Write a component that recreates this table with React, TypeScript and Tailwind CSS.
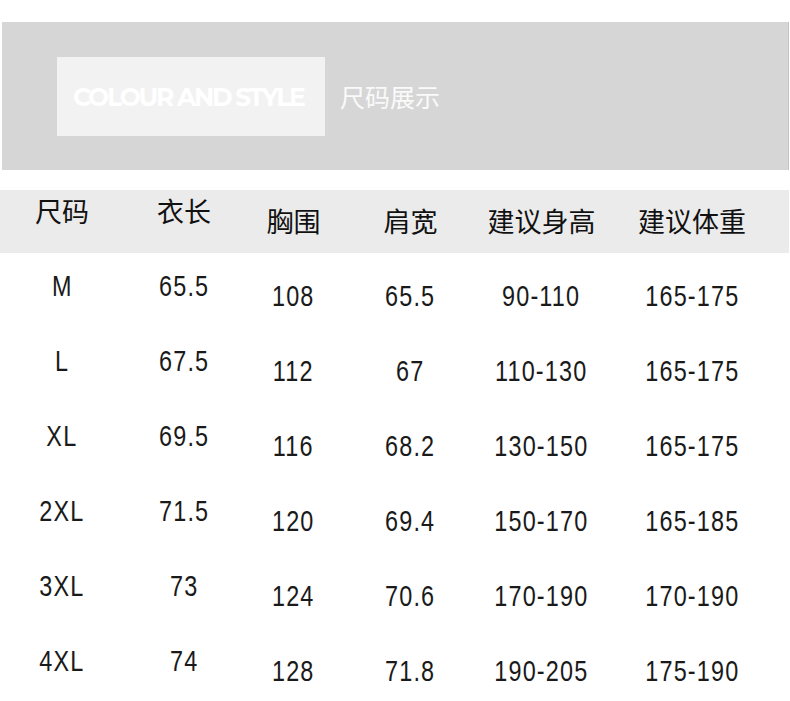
import React from "react";

type Row = {
  size: string;
  length: string;
  chest: string;
  shoulder: string;
  height: string;
  weight: string;
};

const rows: Row[] = [
  { size: "M", length: "65.5", chest: "108", shoulder: "65.5", height: "90-110", weight: "165-175" },
  { size: "L", length: "67.5", chest: "112", shoulder: "67", height: "110-130", weight: "165-175" },
  { size: "XL", length: "69.5", chest: "116", shoulder: "68.2", height: "130-150", weight: "165-175" },
  { size: "2XL", length: "71.5", chest: "120", shoulder: "69.4", height: "150-170", weight: "165-185" },
  { size: "3XL", length: "73", chest: "124", shoulder: "70.6", height: "170-190", weight: "170-190" },
  { size: "4XL", length: "74", chest: "128", shoulder: "71.8", height: "190-205", weight: "175-190" },
];

const headers = ["尺码", "衣长", "胸围", "肩宽", "建议身高", "建议体重"];

const cols = "grid grid-cols-[124px_120px_99px_135px_127px_174px]";
const cjk = "font-['Noto_Sans','Noto_Sans_CJK_SC',sans-serif]";
const num = "font-['Liberation_Sans',sans-serif]";

const App = () => {
  return (
    <div className="w-[790px] bg-white pt-[22px]">
      <div className="ml-[2px] h-[148px] w-[787px] bg-[#d6d6d6] border-r border-[#c4c4c4] flex items-center pl-[55px]">
        <div className="h-[79px] w-[268px] bg-[#f2f2f2] flex items-center pl-[16px]">
          <span className="font-['Montserrat','Liberation_Sans',sans-serif] font-bold text-[25px] tracking-[-2.2px] text-white leading-none mt-[2px]">
            COLOUR AND STYLE
          </span>
        </div>
        <span className={`${cjk} font-normal text-[25px] text-[#fafafa] ml-[15px] leading-none mt-[2px]`}>
          尺码展示
        </span>
      </div>

      <div className={`${cols} mt-[20px] h-[63px] w-[789px] bg-[#ebebeb] items-center`}>
        {headers.map((h, i) => (
          <div
            key={h}
            className={`${cjk} font-normal text-[27px] leading-none text-[#111] text-center ${
              i < 2 ? "pb-[20px]" : ""
            }`}
          >
            {h}
          </div>
        ))}
      </div>

      <div className="pt-[6px]">
        {rows.map((r) => (
          <div key={r.size} className={`${cols} h-[75px] items-center`}>
            {[r.size, r.length, r.chest, r.shoulder, r.height, r.weight].map((v, i) => (
              <div key={i} className={`text-center ${i < 2 ? "pb-[20px]" : ""}`}>
                <span
                  className={`${num} inline-block scale-x-[0.78] text-[30px] tracking-[1.5px] leading-none text-[#1a1a1a]`}
                >
                  {v}
                </span>
              </div>
            ))}
          </div>
        ))}
      </div>
    </div>
  );
};

export default App;
